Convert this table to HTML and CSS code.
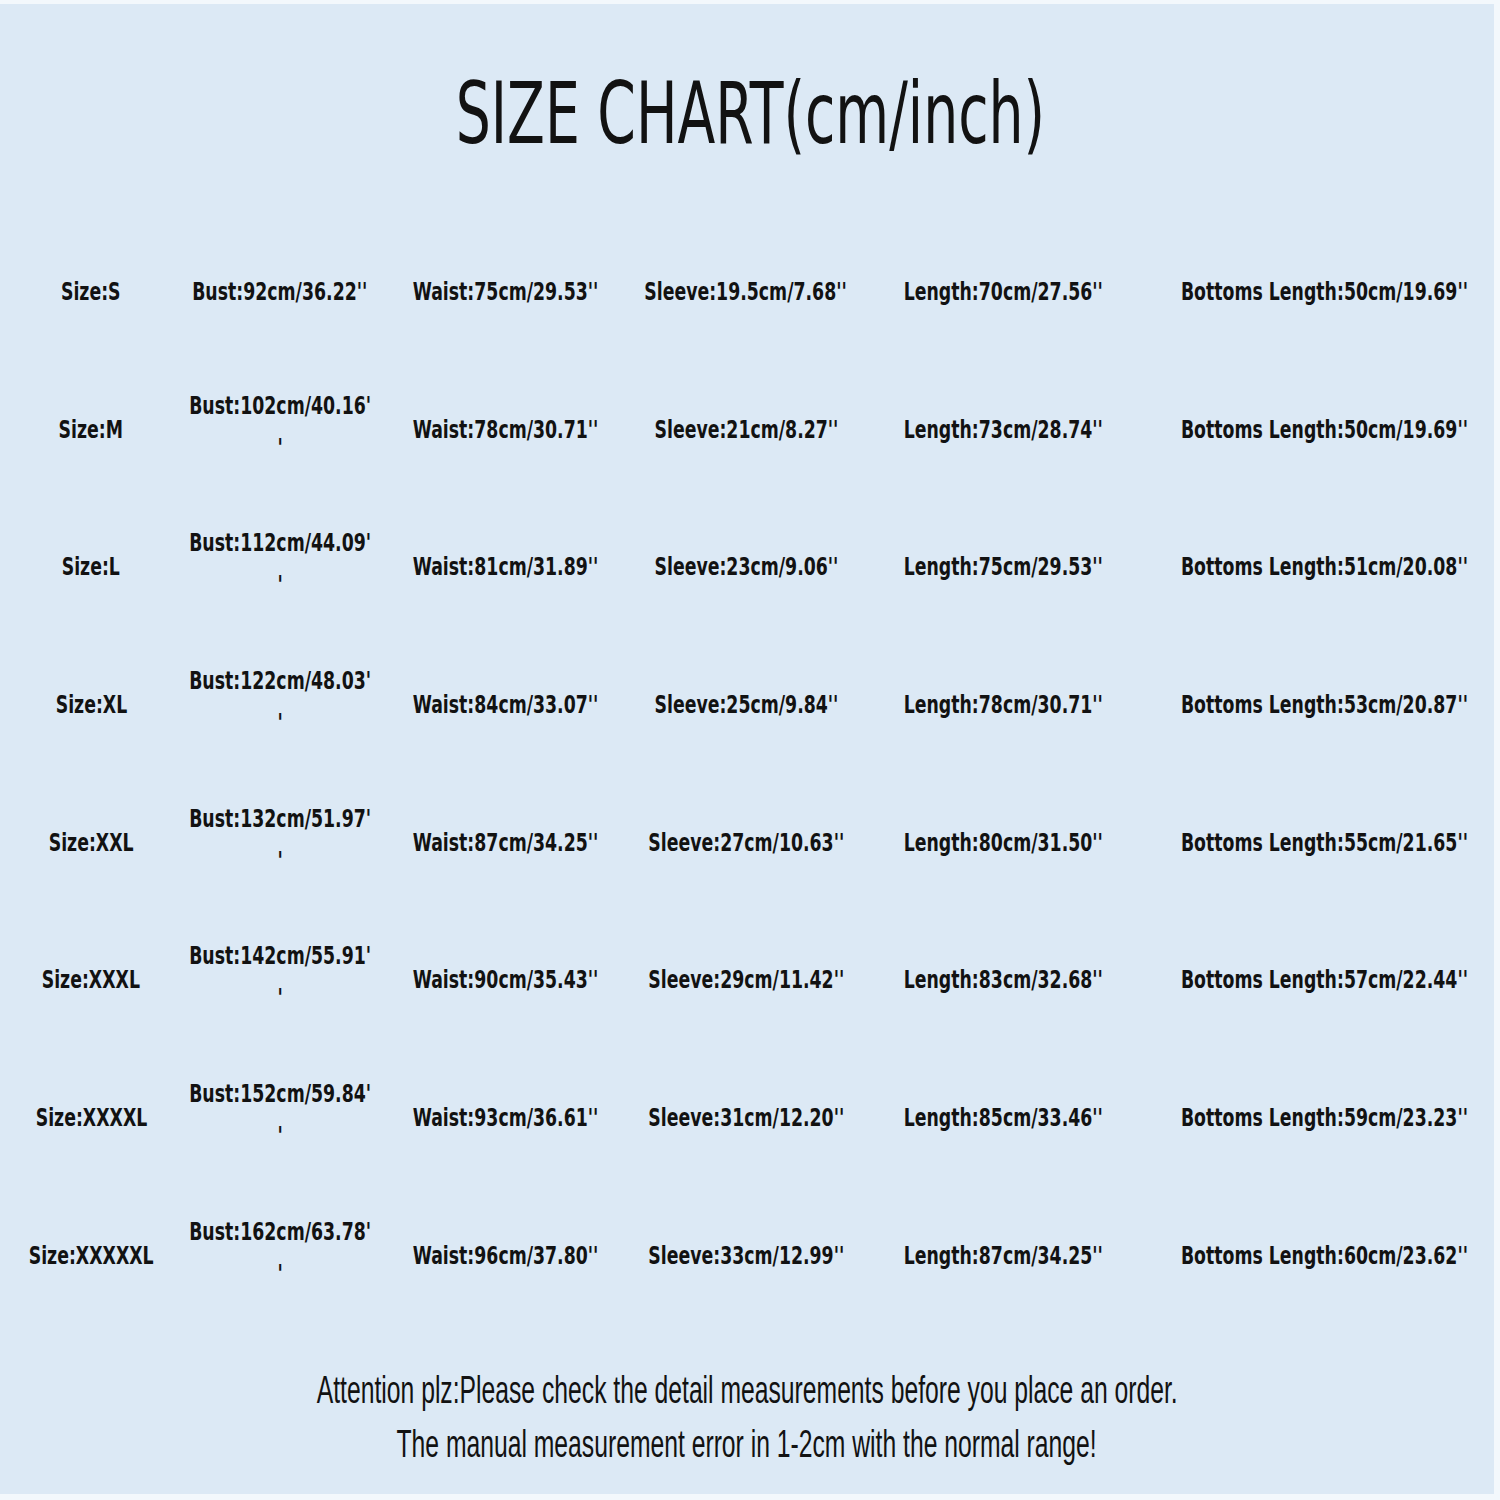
FILE: index.html
```html
<!DOCTYPE html>
<html>
<head>
<meta charset="utf-8">
<link rel="stylesheet" href="styles.css">
</head>
<body>
<main class="sheet">
  <h1 class="title"><span class="title-text">SIZE CHART(cm/inch)</span></h1>
  <section class="chart">
    <div class="cell"><span class="t">Size:S</span></div>
    <div class="cell"><span class="t">Bust:92cm/36.22''</span></div>
    <div class="cell"><span class="t">Waist:75cm/29.53''</span></div>
    <div class="cell"><span class="t">Sleeve:19.5cm/7.68''</span></div>
    <div class="cell"><span class="t">Length:70cm/27.56''</span></div>
    <div class="cell"><span class="t">Bottoms Length:50cm/19.69''</span></div>

    <div class="cell"><span class="t">Size:M</span></div>
    <div class="cell"><span class="t wrap">Bust:102cm/40.16'<br>'</span></div>
    <div class="cell"><span class="t">Waist:78cm/30.71''</span></div>
    <div class="cell"><span class="t">Sleeve:21cm/8.27''</span></div>
    <div class="cell"><span class="t">Length:73cm/28.74''</span></div>
    <div class="cell"><span class="t">Bottoms Length:50cm/19.69''</span></div>

    <div class="cell"><span class="t">Size:L</span></div>
    <div class="cell"><span class="t wrap">Bust:112cm/44.09'<br>'</span></div>
    <div class="cell"><span class="t">Waist:81cm/31.89''</span></div>
    <div class="cell"><span class="t">Sleeve:23cm/9.06''</span></div>
    <div class="cell"><span class="t">Length:75cm/29.53''</span></div>
    <div class="cell"><span class="t">Bottoms Length:51cm/20.08''</span></div>

    <div class="cell"><span class="t">Size:XL</span></div>
    <div class="cell"><span class="t wrap">Bust:122cm/48.03'<br>'</span></div>
    <div class="cell"><span class="t">Waist:84cm/33.07''</span></div>
    <div class="cell"><span class="t">Sleeve:25cm/9.84''</span></div>
    <div class="cell"><span class="t">Length:78cm/30.71''</span></div>
    <div class="cell"><span class="t">Bottoms Length:53cm/20.87''</span></div>

    <div class="cell"><span class="t">Size:XXL</span></div>
    <div class="cell"><span class="t wrap">Bust:132cm/51.97'<br>'</span></div>
    <div class="cell"><span class="t">Waist:87cm/34.25''</span></div>
    <div class="cell"><span class="t">Sleeve:27cm/10.63''</span></div>
    <div class="cell"><span class="t">Length:80cm/31.50''</span></div>
    <div class="cell"><span class="t">Bottoms Length:55cm/21.65''</span></div>

    <div class="cell"><span class="t">Size:XXXL</span></div>
    <div class="cell"><span class="t wrap">Bust:142cm/55.91'<br>'</span></div>
    <div class="cell"><span class="t">Waist:90cm/35.43''</span></div>
    <div class="cell"><span class="t">Sleeve:29cm/11.42''</span></div>
    <div class="cell"><span class="t">Length:83cm/32.68''</span></div>
    <div class="cell"><span class="t">Bottoms Length:57cm/22.44''</span></div>

    <div class="cell"><span class="t">Size:XXXXL</span></div>
    <div class="cell"><span class="t wrap">Bust:152cm/59.84'<br>'</span></div>
    <div class="cell"><span class="t">Waist:93cm/36.61''</span></div>
    <div class="cell"><span class="t">Sleeve:31cm/12.20''</span></div>
    <div class="cell"><span class="t">Length:85cm/33.46''</span></div>
    <div class="cell"><span class="t">Bottoms Length:59cm/23.23''</span></div>

    <div class="cell"><span class="t">Size:XXXXXL</span></div>
    <div class="cell"><span class="t wrap">Bust:162cm/63.78'<br>'</span></div>
    <div class="cell"><span class="t">Waist:96cm/37.80''</span></div>
    <div class="cell"><span class="t">Sleeve:33cm/12.99''</span></div>
    <div class="cell"><span class="t">Length:87cm/34.25''</span></div>
    <div class="cell"><span class="t">Bottoms Length:60cm/23.62''</span></div>
  </section>
  <footer class="note">
    <p class="note-line"><span class="n">Attention plz:Please check the detail measurements before you place an order.</span></p>
    <p class="note-line"><span class="n">The manual measurement error in 1-2cm with the normal range!</span></p>
  </footer>
</main>
</body>
</html>
```
FILE: styles.css
```css
html, body {
  margin: 0;
  padding: 0;
  background: #f3f8fc;
}
.sheet {
  margin-top: 4px;
  width: 1494px;
  height: 1490px;
  background: #dce9f5;
  color: #121212;
  overflow: hidden;
}
.title {
  margin: 0;
  height: 219px;
  padding-top: 60px;
  box-sizing: border-box;
  text-align: center;
  font-family: "DejaVu Sans", sans-serif;
  font-weight: normal;
  font-size: 85px;
  line-height: 100px;
}
.title-text {
  display: inline-block;
  transform: scaleX(0.65);
  transform-origin: center;
  white-space: nowrap;
  margin-left: 6px;
}
.chart {
  display: grid;
  grid-template-columns: 182px 196px 256px 224px 290px 352px;
  grid-auto-rows: 137.7px;
  width: 1500px;
}
.cell {
  display: flex;
  align-items: center;
  justify-content: center;
  text-align: center;
}
.t {
  display: inline-block;
  font-family: "DejaVu Sans Condensed", "DejaVu Sans", sans-serif;
  font-weight: bold;
  font-size: 25px;
  line-height: 36px;
  white-space: nowrap;
  transform: scaleX(0.77);
  transform-origin: center;
}
.wrap {
  line-height: 42px;
  margin-top: -6px;
}
.note {
  padding-top: 38px;
  text-align: center;
  font-family: "Liberation Sans", Arial, sans-serif;
  font-size: 38px;
  line-height: 54px;
}
.note-line {
  margin: 0;
}
.n {
  display: inline-block;
  white-space: nowrap;
  transform: scaleX(0.65);
  transform-origin: center;
}
```
